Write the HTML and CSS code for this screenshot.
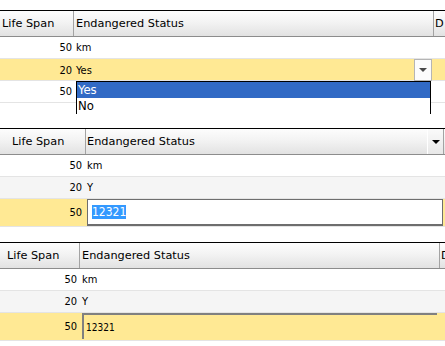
FILE: index.html
```html
<!DOCTYPE html>
<html lang="en">
<head>
    <meta charset="UTF-8">
    <title>Grid Editors</title>
    <link rel="stylesheet" href="styles.css">
</head>
<body>
    <!-- combo box editor -->
    <div class="shot shot1">
        <div class="grid g1">
            <div class="row hdr">
                <div class="hc first">Life Span</div>
                <div class="hc second">Endangered Status</div>
                <div class="hc third">D</div>
            </div>
            <div class="row">
                <div class="num">50</div>
                <div class="txt">km</div>
            </div>
            <div class="row sel">
                <div class="num">20</div>
                <div class="txt combo">Yes<span class="drop"><span class="tri"></span></span></div>
            </div>
            <div class="row">
                <div class="num">50</div>
                <div class="txt"></div>
            </div>
        </div>
        <div class="list">
            <div class="item on">Yes</div>
            <div class="item">No</div>
        </div>
    </div>

    <!-- text editor with selection -->
    <div class="shot shot2">
        <div class="grid g2">
            <div class="row hdr">
                <div class="hc first">Life Span</div>
                <div class="hc second">Endangered Status<span class="hdrop"><span class="tri dark"></span></span></div>
                <div class="hc third"></div>
            </div>
            <div class="row">
                <div class="num">50</div>
                <div class="txt">km</div>
            </div>
            <div class="row alt">
                <div class="num">20</div>
                <div class="txt">Y</div>
            </div>
            <div class="row sel tall">
                <div class="num">50</div>
                <div class="txt span2"><div class="editbox"><span class="mark">12321</span></div></div>
            </div>
        </div>
    </div>

    <!-- inline editor -->
    <div class="shot shot3">
        <div class="grid g3">
            <div class="row hdr">
                <div class="hc first">Life Span</div>
                <div class="hc second">Endangered Status</div>
                <div class="hc third">D</div>
            </div>
            <div class="row">
                <div class="num">50</div>
                <div class="txt">km</div>
            </div>
            <div class="row alt">
                <div class="num">20</div>
                <div class="txt">Y</div>
            </div>
            <div class="row sel tall">
                <div class="num">50</div>
                <div class="txt span2"><div class="inset">12321</div></div>
            </div>
        </div>
    </div>
</body>
</html>
```

FILE: styles.css
```css
body {
    margin: 0;
    width: 445px;
    height: 346px;
    overflow: hidden;
    background: #fff;
    font-family: "DejaVu Sans", sans-serif;
    color: #000;
}
.shot {
    position: relative;
    overflow: hidden;
}
.shot1 {
    height: 114px;
    padding-top: 10px;
    box-sizing: border-box;
}
.shot2 {
    height: 114px;
    padding-top: 14px;
    box-sizing: border-box;
}
.shot3 {
    padding-top: 14px;
}
.g1 { --cols: 74px 360px 1fr; }
.g2 { --cols: 86px 358px 1fr; }
.g3 { --cols: 80px 360px 1fr; }
.row {
    display: grid;
    grid-template-columns: var(--cols);
    height: 21px;
    border-bottom: 1px solid #e4e4e4;
    align-items: center;
}
.row.alt { background: #f5f5f5; }
.row.sel { background: #ffe994; }
.row.tall { height: 27px; }
.hdr {
    height: 25px;
    border-top: 1px solid #000;
    border-bottom: 1px solid #8c8c8c;
    background: linear-gradient(#fdfdfd, #f3f3f3 45%, #e2e2e2);
    align-items: stretch;
}
.hc {
    font-size: 11.3px;
    line-height: 25px;
    white-space: nowrap;
    overflow: hidden;
    position: relative;
}
.hc.first, .hc.second {
    border-right: 1px solid #a3a3a3;
}
.g1 .hc.first { padding-left: 2px; }
.g1 .hc.second { padding-left: 2px; }
.g1 .hc.third { padding-left: 1px; }
.g2 .hc.first { padding-left: 12px; }
.g2 .hc.second { padding-left: 1px; }
.g3 .hc.first { padding-left: 7px; }
.g3 .hc.second { padding-left: 2px; }
.g3 .hc.third { padding-left: 1px; }
.num, .txt {
    font-family: "DejaVu Sans Condensed", "DejaVu Sans", sans-serif;
    font-stretch: condensed;
    font-size: 11px;
    white-space: nowrap;
}
.num { text-align: right; }
.g1 .num { padding-right: 2px; }
.g1 .txt { padding-left: 2px; }
.g2 .num { padding-right: 4px; }
.g2 .txt { padding-left: 1px; }
.g3 .num { padding-right: 3px; }
.g3 .txt { padding-left: 2px; }
.combo {
    display: flex;
    align-items: center;
    height: 100%;
}
.drop {
    margin-left: auto;
    margin-right: 2px;
    width: 16px;
    height: 20px;
    border: 1px solid #b5b5b5;
    background: #fcfcfc;
    display: flex;
    align-items: center;
    justify-content: center;
}
.tri {
    width: 0;
    height: 0;
    border-left: 4px solid transparent;
    border-right: 4px solid transparent;
    border-top: 4px solid #4a4a4a;
}
.tri.dark { border-top-color: #000; }
.hdrop {
    position: absolute;
    right: 0;
    top: 0;
    width: 15px;
    height: 25px;
    border-left: 1px solid #fff;
    background: linear-gradient(#fafafa, #e8e8e8);
    display: flex;
    align-items: center;
    justify-content: center;
}
.list {
    position: absolute;
    left: 76px;
    top: 81px;
    width: 353px;
    border: 1px solid #000;
    background: #fff;
    font-family: "DejaVu Sans Condensed", "DejaVu Sans", sans-serif;
    font-stretch: condensed;
    font-size: 13px;
}
.item {
    height: 16px;
    line-height: 16px;
    padding-left: 1px;
}
.item.on {
    background: #316ac5;
    color: #fff;
}
.span2 {
    grid-column: 2 / 4;
    height: 100%;
}
.editbox {
    box-sizing: border-box;
    width: 356px;
    height: 27px;
    border: 1px solid #6e6e6e;
    border-bottom-width: 2px;
    background: #fff;
    padding-left: 4px;
    font-size: 12px;
    display: flex;
    align-items: center;
}
.mark {
    background: #3399ff;
    color: #fff;
    line-height: 14px;
}
.inset {
    box-sizing: border-box;
    width: 355px;
    height: 26px;
    border-top: 2px solid #808080;
    border-left: 2px solid #808080;
    padding-left: 2px;
    font-size: 10px;
    display: flex;
    align-items: center;
}
```
